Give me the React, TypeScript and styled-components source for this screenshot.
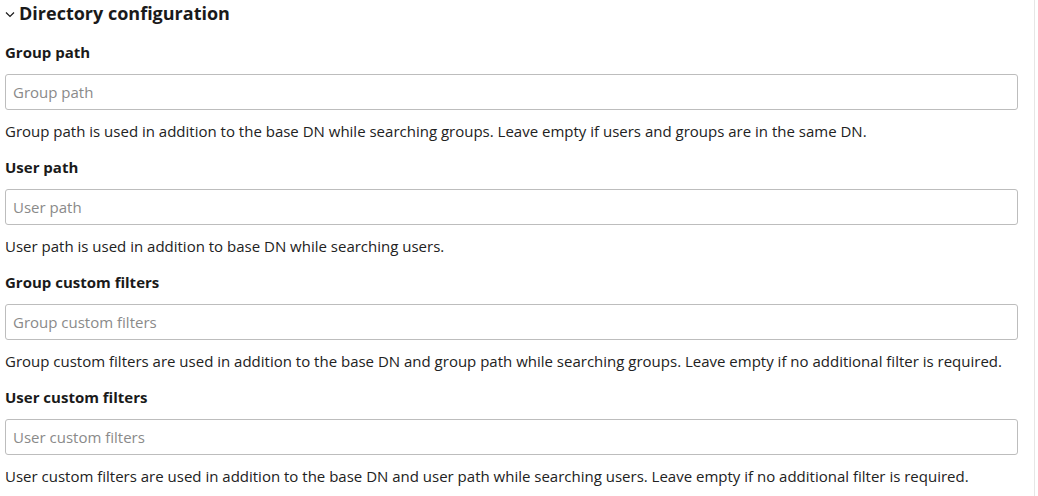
import React from "react";
import styled, { createGlobalStyle } from "styled-components";

const Global = createGlobalStyle`
  html, body { margin: 0; padding: 0; background: #fff; }
  body { font-family: "Open Sans", "Noto Sans", sans-serif; color: #222; }
`;

const Page = styled.div`
  width: 1035px;
  height: 496px;
  border-right: 1px solid #e6e6e6;
  box-sizing: border-box;
  padding: 0 16px 0 5px;
  overflow: hidden;
`;

const Heading = styled.h2`
  margin: 0;
  display: flex;
  align-items: center;
  gap: 4px;
  font-size: 18px;
  font-weight: 700;
  line-height: 26px;
  color: #1a1a1a;
`;

const Chevron = styled.svg`
  width: 10px;
  height: 10px;
  margin-top: 2px;
`;

const Field = styled.div`
  display: flex;
  flex-direction: column;
  margin-top: 16px;
`;

const Label = styled.label`
  font-size: 15px;
  font-weight: 700;
  line-height: 20px;
  color: #1a1a1a;
`;

const Input = styled.input`
  margin-top: 12px;
  height: 36px;
  box-sizing: border-box;
  border: 1px solid #bdbdbd;
  border-radius: 3px;
  padding: 0 7px;
  font-family: "Open Sans", "Noto Sans", sans-serif;
  font-size: 15px;
  color: #222;
  outline: none;
  &::placeholder { color: #8a8a8a; }
`;

const Help = styled.p`
  margin: 11px 0 0;
  font-size: 15px;
  line-height: 20px;
  color: #222;
`;

const fields = [
  {
    label: "Group path",
    help: "Group path is used in addition to the base DN while searching groups. Leave empty if users and groups are in the same DN.",
  },
  {
    label: "User path",
    help: "User path is used in addition to base DN while searching users.",
  },
  {
    label: "Group custom filters",
    help: "Group custom filters are used in addition to the base DN and group path while searching groups. Leave empty if no additional filter is required.",
  },
  {
    label: "User custom filters",
    help: "User custom filters are used in addition to the base DN and user path while searching users. Leave empty if no additional filter is required.",
  },
];

export default function App() {
  return (
    <>
      <Global />
      <Page>
        <Heading>
          <Chevron viewBox="0 0 10 10">
            <path d="M1 3.5 L5 7.5 L9 3.5" fill="none" stroke="#1a1a1a" strokeWidth="1.2" />
          </Chevron>
          Directory configuration
        </Heading>
        {fields.map((f) => (
          <Field key={f.label}>
            <Label>{f.label}</Label>
            <Input placeholder={f.label} />
            <Help>{f.help}</Help>
          </Field>
        ))}
      </Page>
    </>
  );
}
